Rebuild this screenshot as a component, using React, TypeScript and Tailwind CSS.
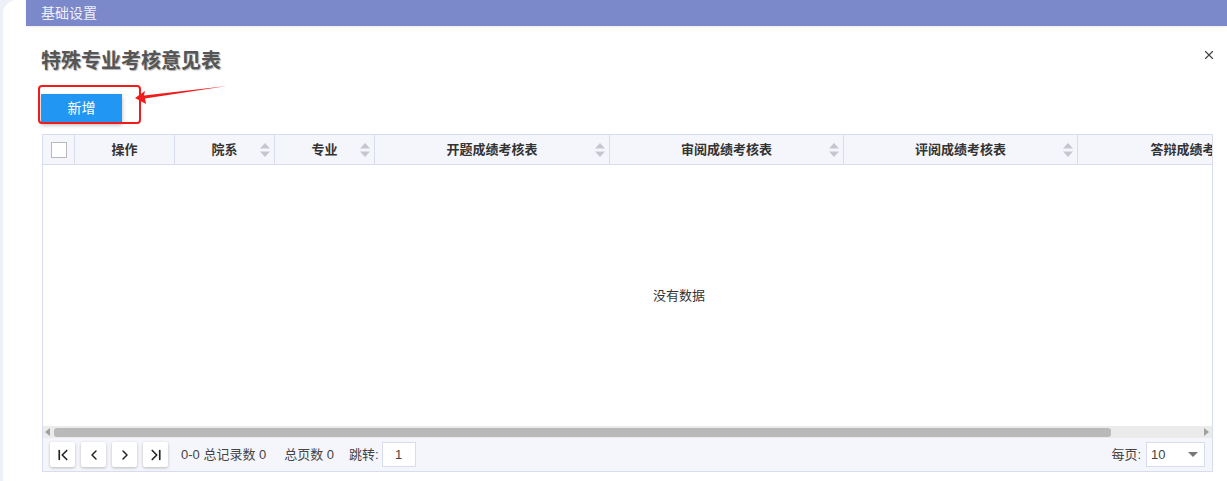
import { ChevronLeft, ChevronRight, ChevronFirst, ChevronLast, X } from 'lucide-react';

const font = { fontFamily: '"Liberation Sans", "Noto Sans CJK SC", sans-serif' };

const SortIcon = () => (
  <svg width="10" height="18" viewBox="0 0 10 18" className="absolute right-[4px] top-1/2 -translate-y-1/2">
    <path d="M5 2 L10 7.5 L0 7.5 Z" fill="#c4c7cf" />
    <path d="M5 16 L10 10.5 L0 10.5 Z" fill="#c4c7cf" />
  </svg>
);

const columns = [
  { label: '操作', w: 'w-[100px]', sort: false },
  { label: '院系', w: 'w-[100px]', sort: true },
  { label: '专业', w: 'w-[100px]', sort: true },
  { label: '开题成绩考核表', w: 'w-[235px]', sort: true },
  { label: '审阅成绩考核表', w: 'w-[234px]', sort: true },
  { label: '评阅成绩考核表', w: 'w-[234px]', sort: true },
  { label: '答辩成绩考核表', w: 'w-[237px]', sort: true },
];

const PageBtn = ({ children }: { children: React.ReactNode }) => (
  <button className="w-[25px] h-[25px] bg-white rounded-[2px] shadow-[0_1px_3px_rgba(0,0,0,0.25)] flex items-center justify-center text-[#222]">
    {children}
  </button>
);

export default function App() {
  return (
    <div className="w-[1227px] h-[481px] bg-[#eef0f8] pl-[3px] overflow-hidden" style={font}>
      <div className="h-full bg-white rounded-tl-[14px] pl-[23px] flex flex-col">
        {/* top bar */}
        <div className="h-[26px] bg-[#7b88c9] pl-[15px] flex items-center text-[14px] text-[#eef0fa] shadow-[0_1px_2px_rgba(0,0,0,0.08)]">
          基础设置
        </div>

        <div className="relative pl-[15px] pr-[14px]">
          <div className="flex items-start justify-between pt-[22px]">
            <h1 className="text-[20px] font-bold text-[#555] leading-[26px] [text-shadow:1px_1px_1px_rgba(0,0,0,0.3)]">
              特殊专业考核意见表
            </h1>
            <X size={14} strokeWidth={2} className="mt-[0px] mr-[-3px] text-[#444]" />
          </div>

          {/* add button with annotation */}
          <div className="relative mt-[20px] h-[29px]">
            <button className="w-[81px] h-[29px] bg-[#2196f3] text-white text-[14px] shadow-[0_2px_4px_rgba(0,0,0,0.3)]">
              新增
            </button>
            <div className="absolute left-[-3px] top-[-9px] w-[103px] h-[39px] border-2 border-[#f01c1c] rounded-[4px]" />
            <svg className="absolute left-[92px] top-[-9px]" width="96" height="22" viewBox="0 0 96 22">
              <path d="M2 13 L12 6 L11 10.5 L94 1 L12 13.5 L13 19 Z" fill="#f01c1c" />
            </svg>
          </div>

          {/* table */}
          <div className="mt-[11px] ml-[1px] w-[1171px] border border-[#d8dcef] overflow-hidden text-[13px] text-[#333]">
            <div className="w-[1272px]">
              <div className="flex h-[30px] bg-[#f5f6fb] border-b border-[#d8dcef] font-bold">
                <div className="w-[32px] flex items-center justify-center border-r border-[#d8dcef]">
                  <div className="w-[16px] h-[16px] border border-[#b8b8b8] bg-white" />
                </div>
                {columns.map((c) => (
                  <div key={c.label} className={`${c.w} relative flex items-center justify-center border-r border-[#d8dcef]`}>
                    {c.label}
                    {c.sort && <SortIcon />}
                  </div>
                ))}
              </div>
              <div className="h-[261px] flex items-center justify-center font-normal">没有数据</div>
            </div>

            {/* horizontal scrollbar */}
            <div className="h-[12px] bg-[#ebebeb] flex items-center px-[2px] gap-[3px]">
              <svg width="6" height="8" viewBox="0 0 6 8">
                <path d="M5 0 L0 4 L5 8 Z" fill="#a0a0a0" />
              </svg>
              <div className="w-[1057px] h-[9px] rounded-[3px] bg-[#b9b9b9]" />
              <div className="flex-1" />
              <svg width="6" height="8" viewBox="0 0 6 8">
                <path d="M0 0 L5 4 L0 8 Z" fill="#a0a0a0" />
              </svg>
            </div>

            {/* pagination */}
            <div className="h-[33px] bg-[#f5f6fb] flex items-center pl-[7px] pr-[7px]">
              <div className="flex gap-[6px]">
                <PageBtn><ChevronFirst size={18} strokeWidth={2.2} /></PageBtn>
                <PageBtn><ChevronLeft size={16} strokeWidth={2.2} /></PageBtn>
                <PageBtn><ChevronRight size={16} strokeWidth={2.2} /></PageBtn>
                <PageBtn><ChevronLast size={18} strokeWidth={2.2} /></PageBtn>
              </div>
              <span className="ml-[13px] text-[#444]">0-0 总记录数 0</span>
              <span className="ml-[18px] text-[#444]">总页数 0</span>
              <span className="ml-[15px] text-[#444]">跳转:</span>
              <div className="ml-[3px] w-[34px] h-[25px] bg-white border border-[#d8dcef] flex items-center justify-center text-[#444]">1</div>
              <div className="flex-1" />
              <span className="text-[#444]">每页:</span>
              <div className="ml-[5px] w-[59px] h-[25px] bg-white border border-[#d8dcef] flex items-center justify-between pl-[4px] pr-[6px] text-[#444]">
                <span>10</span>
                <svg width="10" height="6" viewBox="0 0 10 6">
                  <path d="M0 0 L10 0 L5 5 Z" fill="#777" />
                </svg>
              </div>
            </div>
          </div>
        </div>
      </div>
    </div>
  );
}
